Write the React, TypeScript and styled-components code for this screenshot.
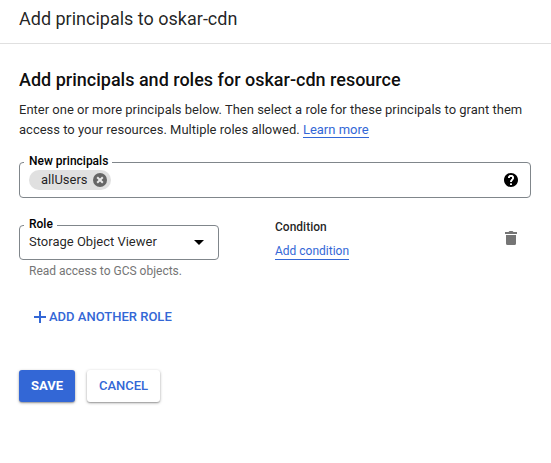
import React from 'react';
import styled, { createGlobalStyle } from 'styled-components';

const GlobalStyle = createGlobalStyle`
  *, *::before, *::after { box-sizing: border-box; }
  body {
    margin: 0;
    background: #fff;
    color: rgba(0, 0, 0, 0.87);
    font-family: Roboto, "Liberation Sans", sans-serif;
    font-size: 13px;
  }
  button { font-family: inherit; cursor: pointer; }
`;

const Panel = styled.main`
  width: 551px;
  height: 463px;
  overflow: hidden;
`;

const Header = styled.header`
  height: 44px;
  padding: 8px 19px 0;
  border-bottom: 1px solid #e0e0e0;
`;

const PanelTitle = styled.h1`
  margin: 0;
  font-size: 18px;
  font-weight: 400;
  line-height: 22px;
`;

const Body = styled.section`
  padding: 24px 20px 0 19px;
`;

const SectionTitle = styled.h2`
  margin: 0;
  font-size: 18px;
  font-weight: 500;
  line-height: 24px;
  color: rgba(0, 0, 0, 0.95);
`;

const Description = styled.p`
  margin: 8px 0 0;
  line-height: 20px;
  white-space: nowrap;
`;

const Link = styled.a`
  color: #3367d6;
  text-decoration: none;
  border-bottom: 1px solid #3367d6;
`;

const Outline = styled.fieldset<{ $width: number; $height: number }>`
  display: block;
  width: ${(p) => p.$width}px;
  height: ${(p) => p.$height}px;
  min-width: 0;
  margin: 0;
  padding: 0 12px 0 9px;
  border: 1px solid #80868b;
  border-radius: 4px;
`;

const Legend = styled.legend`
  height: 13px;
  margin-left: -5px;
  padding: 0 4px 0 5px;
  font-size: 12px;
  font-weight: 500;
  line-height: 10px;
  color: #000;
`;

const FieldRow = styled.div`
  display: flex;
  align-items: center;
  justify-content: space-between;
`;

const Principals = styled.div`
  margin-top: 16px;
`;

const Chip = styled.span`
  display: flex;
  align-items: center;
  gap: 5px;
  height: 20px;
  margin-top: 1px;
  padding: 0 4px 0 12px;
  border-radius: 10px;
  background: #e0e0e0;
`;

const ChipLabel = styled.span`
  padding-bottom: 2px;
`;

const Icon = styled.svg`
  display: block;
  flex: none;
`;

const RoleGrid = styled.div`
  display: grid;
  grid-template-columns: 256px 1fr 12px;
  align-items: start;
  margin-top: 21px;
  padding-right: 14px;
`;

const SelectRow = styled(FieldRow)`
  height: 21px;
  padding-right: 2px;
`;

const SelectValue = styled.span`
  padding-bottom: 2px;
`;

const Hint = styled.div`
  margin: 3px 0 0 10px;
  font-size: 12px;
  line-height: 16px;
  color: #757575;
`;

const Condition = styled.div`
  display: flex;
  flex-direction: column;
  align-items: flex-start;
  gap: 8px;
  font-size: 12px;
  line-height: 16px;
`;

const ConditionLabel = styled.span`
  font-weight: 500;
`;

const TrashButton = styled.button`
  margin: 12px 0 0;
  padding: 0;
  border: 0;
  background: none;
`;

const AddRole = styled.button`
  display: flex;
  align-items: center;
  gap: 3px;
  height: 20px;
  margin: 28px 0 0 15px;
  padding: 0;
  border: 0;
  background: none;
  color: #3367d6;
  font-size: 13px;
  font-weight: 500;
`;

const AddRoleLabel = styled.span`
  padding-bottom: 2px;
`;

const Actions = styled.div`
  display: flex;
  gap: 12px;
  margin-top: 43px;
`;

const ActionButton = styled.button<{ $primary?: boolean }>`
  width: ${(p) => (p.$primary ? 56 : 73)}px;
  height: 32px;
  padding: 0 0 2px;
  border: 0;
  border-radius: 3px;
  background: ${(p) => (p.$primary ? '#3367d6' : '#fff')};
  color: ${(p) => (p.$primary ? '#fff' : '#3367d6')};
  font-size: 13px;
  font-weight: ${(p) => (p.$primary ? 700 : 500)};
  box-shadow: 0 1px 3px rgba(0, 0, 0, 0.35), 0 1px 1px rgba(0, 0, 0, 0.15);
`;

export default function App() {
  return (
    <>
      <GlobalStyle />
      <Panel>
        <Header>
          <PanelTitle>Add principals to oskar-cdn</PanelTitle>
        </Header>
        <Body>
          <SectionTitle>Add principals and roles for oskar-cdn resource</SectionTitle>
          <Description>
            Enter one or more principals below. Then select a role for these principals to grant them
            <br />
            access to your resources. Multiple roles allowed. <Link>Learn more</Link>
          </Description>

          <Principals>
            <Outline $width={512} $height={42}>
              <Legend>New principals</Legend>
              <FieldRow>
                <Chip>
                  <ChipLabel>allUsers</ChipLabel>
                  <Icon width="14" height="14" viewBox="0 0 14 14">
                    <circle cx="7" cy="7" r="7" fill="#666" />
                    <path d="M4.200 4.200l5.600 5.600M9.800 4.200l-5.600 5.600" stroke="#e8e8e8" strokeWidth="2" />
                  </Icon>
                </Chip>
                <Icon width="14" height="14" viewBox="2 2 20 20">
                  <path d="M12 2C6.480 2 2 6.480 2 12s4.480 10 10 10 10-4.480 10-10S17.520 2 12 2zm1 17h-2v-2h2v2zm2.070-7.750l-.9.920C13.450 12.900 13 13.500 13 15h-2v-.5c0-1.100.45-2.100 1.170-2.830l1.240-1.260c.37-.36.59-.86.59-1.410 0-1.100-.9-2-2-2s-2 .9-2 2H8c0-2.210 1.790-4 4-4s4 1.790 4 4c0 .88-.36 1.680-.93 2.250z" fill="#000" />
                  <path d="M9 9c0-1.700 1.300-3 3-3s3 1.300 3 3c0 2.300-3 2.800-3 6M12 17v2" fill="none" stroke="#fff" strokeWidth="2.500" />
                </Icon>
              </FieldRow>
            </Outline>
          </Principals>

          <RoleGrid>
            <div>
              <Outline $width={200} $height={41}>
                <Legend>Role</Legend>
                <SelectRow>
                  <SelectValue>Storage Object Viewer</SelectValue>
                  <Icon width="10" height="5" viewBox="0 0 10 5">
                    <path d="M0 0h10L5 5z" fill="#000" />
                  </Icon>
                </SelectRow>
              </Outline>
              <Hint>Read access to GCS objects.</Hint>
            </div>
            <Condition>
              <ConditionLabel>Condition</ConditionLabel>
              <Link>Add condition</Link>
            </Condition>
            <TrashButton aria-label="Delete role">
              <Icon width="12" height="14" viewBox="0 0 12 14">
                <path d="M0 1h3.500l1-1h3l1 1H12v2H0zM1 4h10v8.500a1.500 1.500 0 0 1-1.500 1.500h-7A1.500 1.500 0 0 1 1 12.500z" fill="#757575" />
              </Icon>
            </TrashButton>
          </RoleGrid>

          <AddRole>
            <Icon width="12" height="12" viewBox="0 0 12 12">
              <path d="M5 0h2v5h5v2H7v5H5V7H0V5h5z" fill="#3367d6" />
            </Icon>
            <AddRoleLabel>ADD ANOTHER ROLE</AddRoleLabel>
          </AddRole>

          <Actions>
            <ActionButton $primary>SAVE</ActionButton>
            <ActionButton>CANCEL</ActionButton>
          </Actions>
        </Body>
      </Panel>
    </>
  );
}
